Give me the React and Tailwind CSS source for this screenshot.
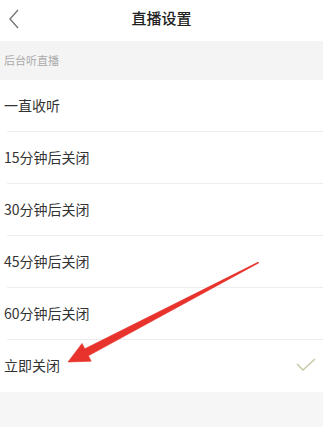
import { useState } from "react";

const options = ["一直收听", "15分钟后关闭", "30分钟后关闭", "45分钟后关闭", "60分钟后关闭", "立即关闭"];

export default function App() {
  const [selected, setSelected] = useState(5);

  return (
    <div
      className="relative w-[323px] h-[427px] overflow-hidden bg-white"
      style={{ fontFamily: '"Noto Sans CJK SC", "Noto Sans", sans-serif' }}
    >
      {/* header */}
      <div className="h-[41px] flex items-center relative">
        <svg className="absolute left-[7px] top-[8px]" width="14" height="22" viewBox="0 0 14 22">
          <path d="M11 2 L3 11 L11 20" fill="none" stroke="#777" strokeWidth="1.4" />
        </svg>
        <div className="flex-1 text-center text-[15px] font-medium text-[#222] -mt-[5px]">直播设置</div>
      </div>

      {/* section title */}
      <div className="h-[39px] bg-[#f4f4f4] flex items-center px-[4px] text-[11px] text-[#aaa]">后台听直播</div>

      {/* options */}
      <div className="flex flex-col">
        {options.map((label, i) => (
          <div
            key={label}
            onClick={() => setSelected(i)}
            className="h-[52px] flex items-center relative"
          >
            <span className="pl-[4px] text-[14px] text-[#333] -mt-[2px]">{label}</span>
            {selected === i && (
              <svg className="absolute right-[7px] top-[18px]" width="20" height="14" viewBox="0 0 20 14">
                <path d="M1 6 L7 12 L19 1" fill="none" stroke="#c9c8a8" strokeWidth="1.5" />
              </svg>
            )}
            {i < options.length - 1 && (
              <div className="absolute bottom-0 left-[7px] right-0 h-px bg-[#ededed]" />
            )}
          </div>
        ))}
      </div>

      <div className="h-[40px] bg-[#f6f6f6]" />

      {/* red annotation arrow */}
      <svg className="absolute left-0 top-0 pointer-events-none" width="323" height="427" viewBox="0 0 323 427">
        <path
          d="M68 362 L82 343.4 L84.8 348.8 L258.3 262.1 L258.7 262.9 L88.4 355.8 L91.2 361.2 Z"
          fill="#e8322c"
          strokeLinejoin="round"
          stroke="#e8322c"
          strokeWidth="0.6"
        />
      </svg>
    </div>
  );
}
